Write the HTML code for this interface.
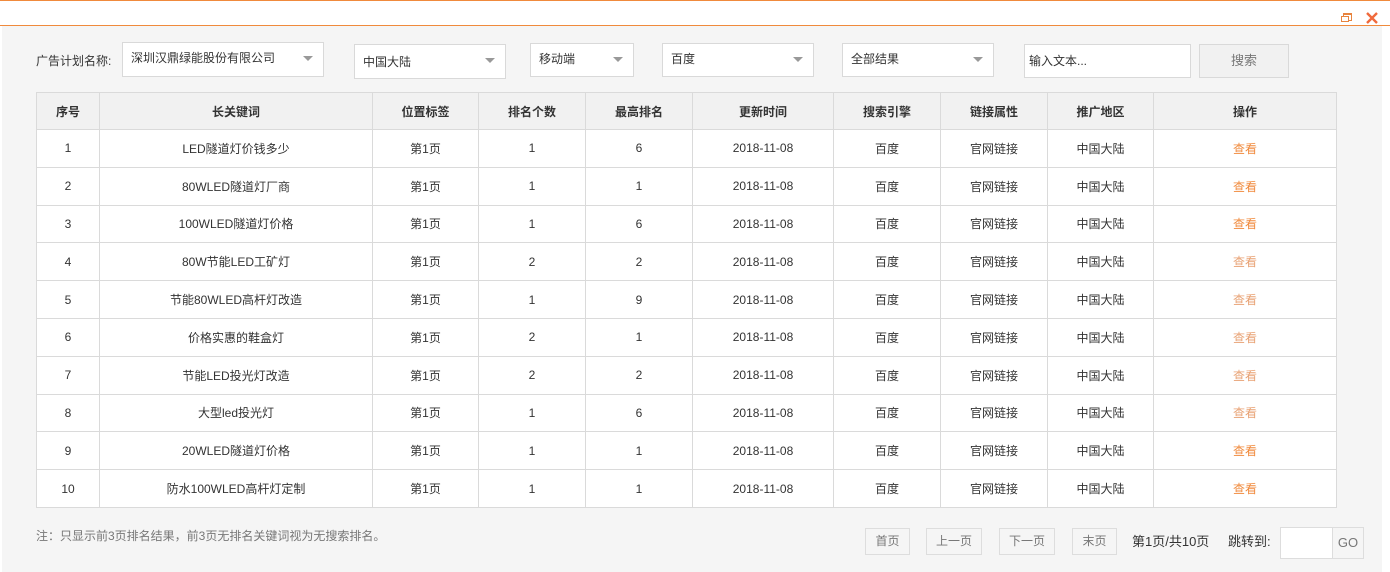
<!DOCTYPE html>
<html><head><meta charset="utf-8"><style>
*{box-sizing:border-box;margin:0;padding:0}
body{width:1390px;height:572px;background:#fff;font-family:"Liberation Sans","Noto Sans CJK SC",sans-serif;font-size:12px;color:#333;position:relative;overflow:hidden}
.top{position:absolute;left:0;top:0;width:1390px;height:26px;border-top:1px solid #f08a3c;border-bottom:1px solid #f08a3c;background:#fff}
.main{position:absolute;left:2px;top:26px;width:1380px;height:546px;background:#f5f5f5}
.abs{position:absolute}
.sel{position:absolute;background:#fff;border:1px solid #d9d9d9;padding-left:8px;line-height:30px;color:#333}
.sel:after{content:"";position:absolute;right:10px;top:13px;border-left:5px solid transparent;border-right:5px solid transparent;border-top:5px solid #999}
table{position:absolute;left:36px;top:92px;border-collapse:collapse;background:#fff}
td,th{border:1px solid #dadada;text-align:center;height:37.8px;font-size:12px;color:#333}
th{background:#f1f1f1;font-weight:bold;height:37px}
a{color:#f08a3c;text-decoration:none}
a.v{color:#e8a274}
.pb{position:absolute;top:528px;height:27px;border:1px solid #ddd;line-height:25px;text-align:center;color:#777;background:#f5f5f5}
</style></head><body>
<div class="top"></div>
<div class="abs" style="left:1343px;top:13px;width:9px;height:8px;border:1px solid #e8843f;border-top-width:2px;background:#fff"></div>
<div class="abs" style="left:1341px;top:16px;width:8px;height:6px;border:1px solid #e8843f;background:#fff"></div>
<svg class="abs" style="left:1365px;top:11px" width="14" height="14"><path d="M2 2L12 12M12 2L2 12" stroke="#f06a3c" stroke-width="2.4"/></svg>
<div class="main"></div>
<div class="abs" style="left:36px;top:53px;line-height:16px">广告计划名称:</div>
<div class="sel" style="left:122px;top:42px;width:202px;height:35px">深圳汉鼎绿能股份有限公司</div>
<div class="sel" style="left:354px;top:44px;width:152px;height:35px;line-height:34px">中国大陆</div>
<div class="sel" style="left:530px;top:43px;width:104px;height:34px">移动端</div>
<div class="sel" style="left:662px;top:43px;width:152px;height:34px">百度</div>
<div class="sel" style="left:842px;top:43px;width:152px;height:34px">全部结果</div>
<div class="abs" style="left:1024px;top:44px;width:167px;height:34px;border:1px solid #d9d9d9;background:#fff;line-height:32px;padding-left:4px">输入文本...</div>
<div class="abs" style="left:1199px;top:44px;width:90px;height:34px;border:1px solid #d9d9d9;background:#f1f1f1;line-height:32px;text-align:center;color:#777;font-size:13px">搜索</div>
<table>
<tr><th style="width:63px">序号</th><th style="width:273px">长关键词</th><th style="width:106px">位置标签</th><th style="width:107px">排名个数</th><th style="width:107px">最高排名</th><th style="width:141px">更新时间</th><th style="width:107px">搜索引擎</th><th style="width:107px">链接属性</th><th style="width:106px">推广地区</th><th style="width:183px">操作</th></tr>
<tr><td>1</td><td>LED隧道灯价钱多少</td><td>第1页</td><td>1</td><td>6</td><td>2018-11-08</td><td>百度</td><td>官网链接</td><td>中国大陆</td><td><a>查看</a></td></tr>
<tr><td>2</td><td>80WLED隧道灯厂商</td><td>第1页</td><td>1</td><td>1</td><td>2018-11-08</td><td>百度</td><td>官网链接</td><td>中国大陆</td><td><a>查看</a></td></tr>
<tr><td>3</td><td>100WLED隧道灯价格</td><td>第1页</td><td>1</td><td>6</td><td>2018-11-08</td><td>百度</td><td>官网链接</td><td>中国大陆</td><td><a>查看</a></td></tr>
<tr><td>4</td><td>80W节能LED工矿灯</td><td>第1页</td><td>2</td><td>2</td><td>2018-11-08</td><td>百度</td><td>官网链接</td><td>中国大陆</td><td><a class="v">查看</a></td></tr>
<tr><td>5</td><td>节能80WLED高杆灯改造</td><td>第1页</td><td>1</td><td>9</td><td>2018-11-08</td><td>百度</td><td>官网链接</td><td>中国大陆</td><td><a class="v">查看</a></td></tr>
<tr><td>6</td><td>价格实惠的鞋盒灯</td><td>第1页</td><td>2</td><td>1</td><td>2018-11-08</td><td>百度</td><td>官网链接</td><td>中国大陆</td><td><a class="v">查看</a></td></tr>
<tr><td>7</td><td>节能LED投光灯改造</td><td>第1页</td><td>2</td><td>2</td><td>2018-11-08</td><td>百度</td><td>官网链接</td><td>中国大陆</td><td><a class="v">查看</a></td></tr>
<tr><td>8</td><td>大型led投光灯</td><td>第1页</td><td>1</td><td>6</td><td>2018-11-08</td><td>百度</td><td>官网链接</td><td>中国大陆</td><td><a class="v">查看</a></td></tr>
<tr><td>9</td><td>20WLED隧道灯价格</td><td>第1页</td><td>1</td><td>1</td><td>2018-11-08</td><td>百度</td><td>官网链接</td><td>中国大陆</td><td><a>查看</a></td></tr>
<tr><td>10</td><td>防水100WLED高杆灯定制</td><td>第1页</td><td>1</td><td>1</td><td>2018-11-08</td><td>百度</td><td>官网链接</td><td>中国大陆</td><td><a>查看</a></td></tr>
</table>
<div class="abs" style="left:36px;top:528px;color:#777;line-height:16px">注：只显示前3页排名结果，前3页无排名关键词视为无搜索排名。</div>
<div class="pb" style="left:865px;width:45px">首页</div>
<div class="pb" style="left:926px;width:56px">上一页</div>
<div class="pb" style="left:999px;width:56px">下一页</div>
<div class="pb" style="left:1072px;width:45px">末页</div>
<div class="abs" style="left:1132px;top:533px;color:#333;font-size:13px;line-height:17px">第1页/共10页</div>
<div class="abs" style="left:1228px;top:533px;color:#333;font-size:13px;line-height:17px">跳转到:</div>
<div class="abs" style="left:1280px;top:527px;width:84px;height:32px;border:1px solid #ddd;background:#fff"><div style="position:absolute;left:51px;top:0;width:31px;height:30px;border-left:1px solid #ddd;background:#f5f5f5;line-height:30px;text-align:center;color:#777;font-size:13px">GO</div></div>
</body></html>
